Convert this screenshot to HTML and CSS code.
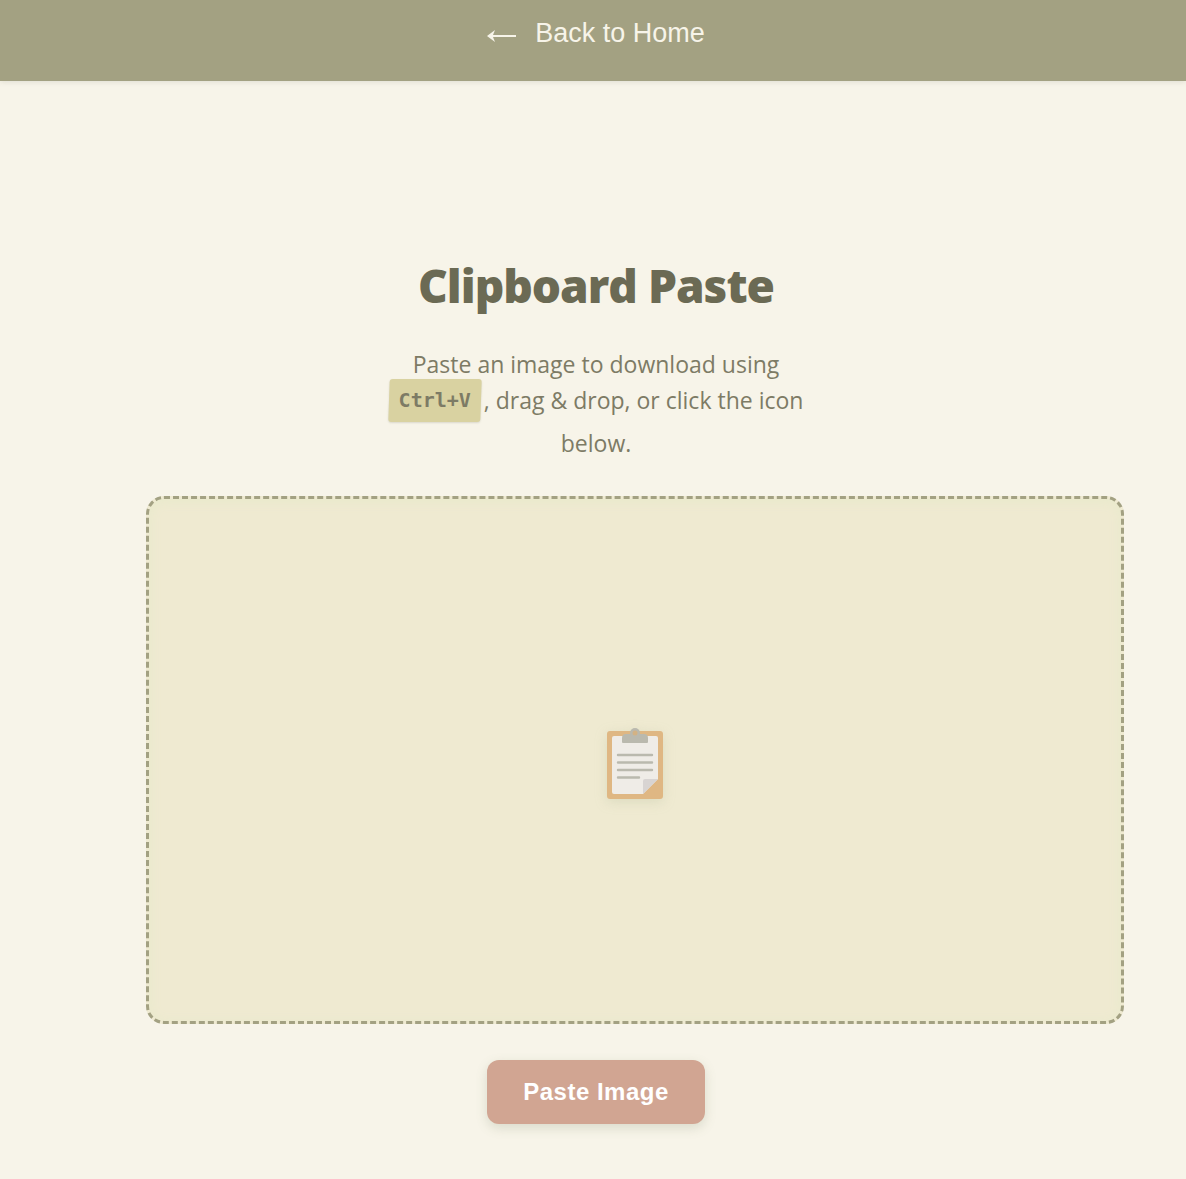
FILE: index.html
```html
<!DOCTYPE html>
<html lang="en">
<head>
<meta charset="utf-8">
<meta name="viewport" content="width=device-width, initial-scale=1">
<title>Clipboard Paste</title>
<link rel="stylesheet" href="styles.css">
</head>
<body>
<header class="topbar">
  <a class="back" href="#">
    <svg class="arrow" viewBox="0 0 30 12" aria-hidden="true"><path d="M0 6 L8 0 L6 5 H29 V7 H6 L8 12 Z"/></svg>
    <span>Back to Home</span>
  </a>
</header>
<main class="container">
  <h1 class="title">Clipboard Paste</h1>
  <p class="intro">Paste an image to download using <kbd class="key">Ctrl+V</kbd>, drag &amp; drop, or click the icon below.</p>
  <div class="dropzone">
    <svg class="clipboard" viewBox="0 0 56 72" role="img" aria-label="Clipboard">
      <rect x="0" y="3" width="56" height="68" rx="3" fill="#dfb783"/>
      <path d="M7 8 H49 Q51 8 51 10 V51 L36 66 H7 Q5 66 5 64 V10 Q5 8 7 8 Z" fill="#efece7"/>
      <path d="M51 51 H38 Q36 51 36 53 V66 Z" fill="#d8d4d2"/>
      <path d="M16 15 Q15 15 15 14 V10 Q15 6 19 6 H23 A5 5 0 0 1 33 6 H37 Q41 6 41 10 V14 Q41 15 40 15 Z" fill="#bab9ae"/>
      <circle cx="28" cy="5" r="5" fill="#bab9ae"/>
      <circle cx="28" cy="5" r="2.500" fill="#d3b284"/>
      <path d="M11 27 H45 M11 34.500 H45 M11 42 H45 M11 49.500 H32" stroke="#bab9ae" stroke-width="2.400" stroke-linecap="round"/>
    </svg>
  </div>
  <button class="paste" type="button">Paste Image</button>
</main>
</body>
</html>
```
FILE: styles.css
```css
body {
  margin: 0;
  min-height: 100vh;
  background: #f7f4e9;
  color: #7d7b65;
  font-family: "Segoe UI", "Open Sans", sans-serif;
}

.topbar {
  display: flex;
  justify-content: center;
  padding: 17px 0 32px 6px;
  background: #a3a182;
  box-shadow: 0 1px 5px rgba(107, 106, 84, 0.16);
}

.back {
  display: flex;
  align-items: center;
  gap: 18px;
  color: #f7f4e9;
  font: 27px/32px "Liberation Sans", Arial, sans-serif;
  text-decoration: none;
}

.arrow {
  width: 30px;
  height: 12px;
  margin-top: 6px;
  fill: currentColor;
}

.container {
  display: flex;
  flex-direction: column;
  align-items: center;
  max-width: 900px;
  margin: 0 auto;
  padding: 168px 0 54px 6px;
}

.title {
  margin: 0 0 25px;
  color: #6b6a54;
  font-size: 46px;
  font-weight: 800;
  line-height: 72px;
  letter-spacing: -1px;
}

.intro {
  max-width: 430px;
  margin: 0 0 35px;
  font-size: 23px;
  line-height: 36px;
  text-align: center;
}

.key {
  display: inline-block;
  position: relative;
  z-index: 0;
  padding: 3px 10px 4px;
  margin: -5px 3px 3px 0;
  font: bold 20px/36px "DejaVu Sans Mono", monospace;
  vertical-align: 2px;
}

.key::before {
  content: "";
  position: absolute;
  inset: 0;
  z-index: -1;
  border-radius: 3px;
  background: #d9d2a1;
  box-shadow: 0 1px 2px rgba(107, 106, 84, 0.2);
  transform: skewX(-2deg);
}

.dropzone {
  display: flex;
  align-items: center;
  justify-content: center;
  align-self: flex-start;
  width: 100%;
  height: 450px;
  padding: 40px 36px 32px;
  border: 3px dashed #a3a182;
  border-radius: 18px;
  background: #efead1;
  box-shadow: inset 0 2px 12px #e8eacb;
}

.clipboard {
  width: 56px;
  height: 72px;
  filter: drop-shadow(0 3px 6px rgba(163, 177, 138, 0.25));
}

.paste {
  margin-top: 36px;
  padding: 16px 36px;
  border: 0;
  border-radius: 12px;
  background: #d1a592;
  color: #fff;
  font: bold 24px/32px "Liberation Sans", Arial, sans-serif;
  letter-spacing: 0.5px;
  box-shadow: 0 4px 12px rgba(107, 120, 84, 0.2);
}
```
